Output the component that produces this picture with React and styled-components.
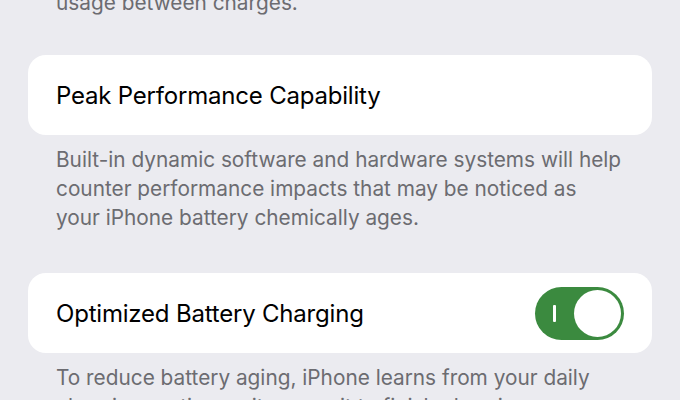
import React from 'react'
import styled, { createGlobalStyle } from 'styled-components';

const GlobalStyle = createGlobalStyle`
body{
    margin:0;
    background:#ebebf0;
    font-family:Inter, "Noto Sans", sans-serif;
    -webkit-font-smoothing:antialiased;
}
`;

const Screen = styled.div`
width:680px;
height:400px;
overflow:hidden;
box-sizing:border-box;
padding:0 28px;
background:#ebebf0;
`;

const Section = styled.div`
display:flex;
flex-direction:column;
margin-bottom:${p => (p.$gap ? p.$gap : 41)}px;
`;

const Card = styled.div`
height:80px;
box-sizing:border-box;
background:#fff;
border-radius:18px;
padding:0 28px;
display:flex;
align-items:center;
justify-content:space-between;
`;

const Label = styled.span`
font-size:24px;
color:#000;
letter-spacing:-0.2px;
`;

const Footer = styled.p`
margin:${p => (p.$top ? '-12px 0 0' : '10px 0 0')};
padding:0 0 0 28px;
font-size:20.8px;
line-height:29px;
color:#6c6c71;
white-space:nowrap;
`;

const Toggle = styled.div`
position:relative;
width:89px;
height:53px;
border-radius:27px;
background:${p => (p.$on ? '#3b8a3f' : '#e3e3e8')};
flex-shrink:0;
`;

const Knob = styled.div`
position:absolute;
top:3px;
right:3px;
width:47px;
height:47px;
border-radius:50%;
background:#fff;
`;

const OnMark = styled.div`
position:absolute;
left:18px;
top:18px;
width:2.5px;
height:17px;
background:#fff;
border-radius:1px;
`;

const Switch = ({ on }) => (
    <Toggle $on={on}>
        <OnMark />
        <Knob />
    </Toggle>
);

export default function App() {
    return (
        <Screen>
            <GlobalStyle />
            <Section $gap={38}>
                <Footer $top>usage between charges.</Footer>
            </Section>
            <Section>
                <Card>
                    <Label>Peak Performance Capability</Label>
                </Card>
                <Footer>
                    Built-in dynamic software and hardware systems will help<br />
                    counter performance impacts that may be noticed as<br />
                    your iPhone battery chemically ages.
                </Footer>
            </Section>
            <Section>
                <Card>
                    <Label>Optimized Battery Charging</Label>
                    <Switch on />
                </Card>
                <Footer>
                    To reduce battery aging, iPhone learns from your daily<br />
                    charging routine so it can wait to finish charging
                </Footer>
            </Section>
        </Screen>
    )
}
